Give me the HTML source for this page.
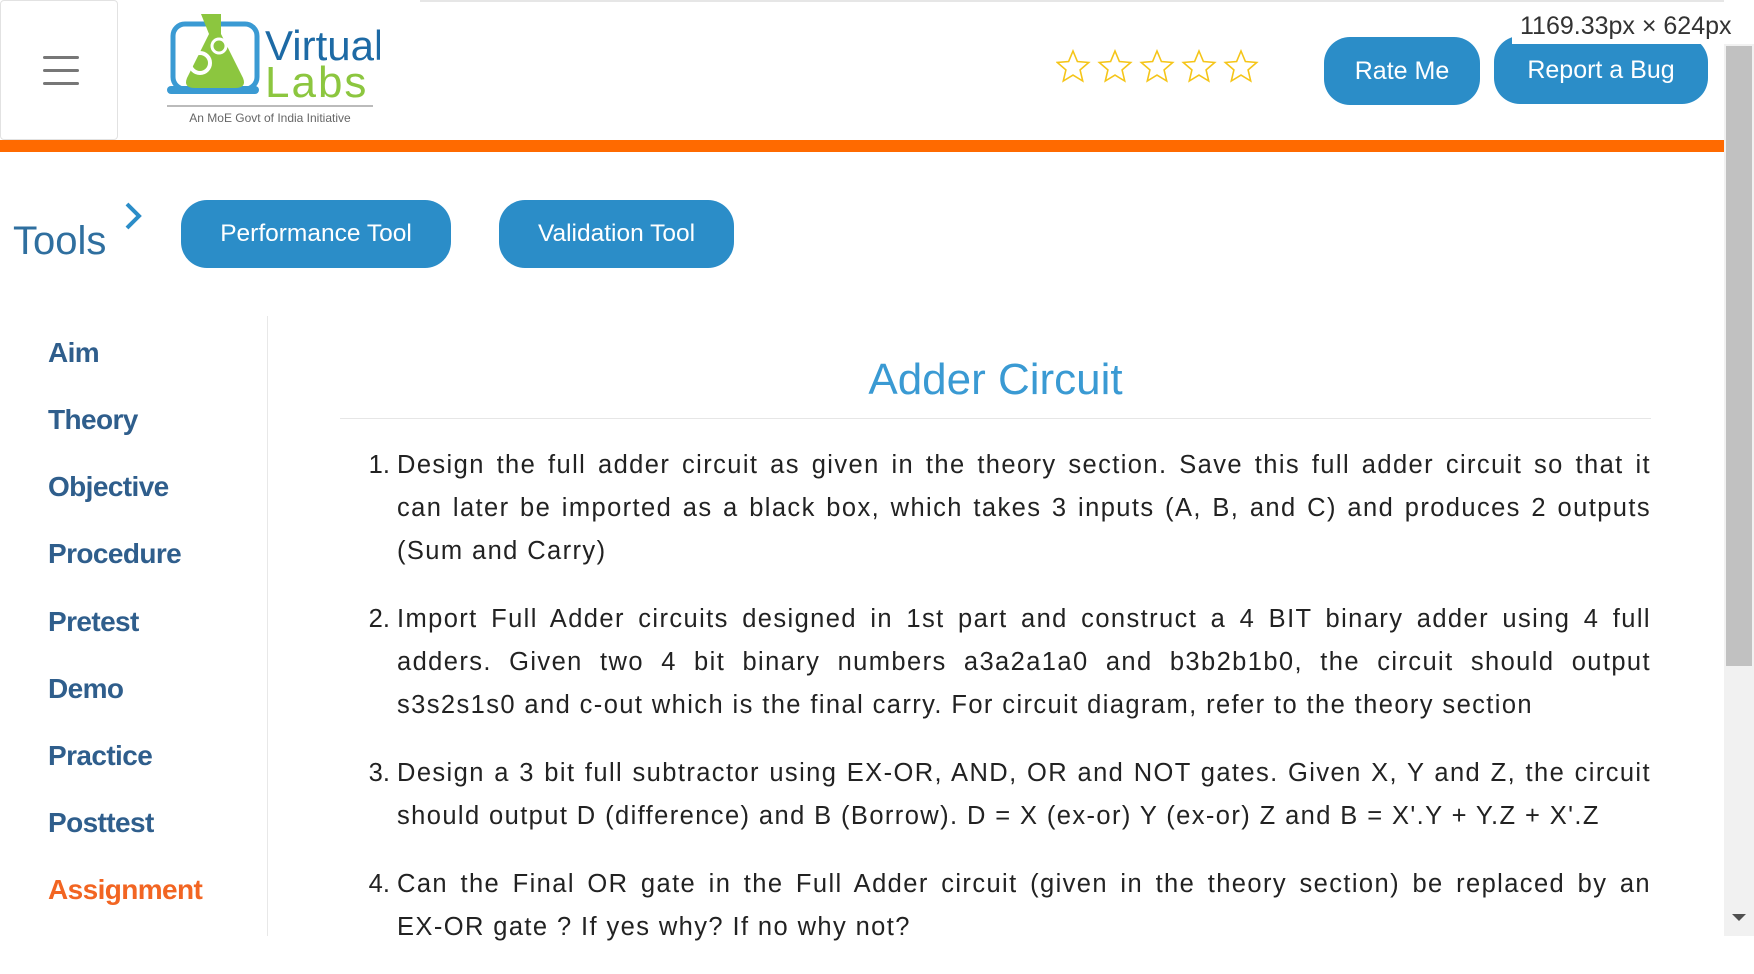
<!DOCTYPE html>
<html><head><meta charset="utf-8">
<style>
*{margin:0;padding:0;box-sizing:border-box}
html,body{width:1754px;height:936px;overflow:hidden;background:#fff;font-family:"Liberation Sans",sans-serif}
.abs{position:absolute}
.ham{left:0;top:0;width:118px;height:140px;border:1px solid #e2e2e2;border-radius:4px}
.ham i{position:absolute;left:42px;width:36px;height:3px;background:#777;border-radius:2px}
.btn{position:absolute;background:#2b8dc8;color:#fff;border-radius:26px;display:flex;align-items:center;justify-content:center}
.side{left:48px;font-size:28px;color:#2f5e8c;font-weight:bold;letter-spacing:-0.6px}
ol{position:absolute;left:397px;top:444px;width:1254px;font-size:25.5px;color:#222;line-height:43px;text-align:justify;letter-spacing:1.4px}
ol li{margin-bottom:25px;padding-left:0}
ol li::marker{letter-spacing:0}
.nb{white-space:nowrap}
</style></head><body>
<div class="abs ham"><i style="top:55px"></i><i style="top:68px"></i><i style="top:81px"></i></div>
<div class="abs" style="left:420px;top:0;width:1304px;height:2px;background:#e6e6e6"></div>
<svg class="abs" style="left:165px;top:10px" width="215" height="120" viewBox="0 0 215 120">
<rect x="8" y="14" width="84" height="65" rx="12" fill="none" stroke="#3a9ad3" stroke-width="5"/>
<rect x="2" y="76" width="92" height="8" rx="4" fill="#3a9ad3"/>
<path d="M36 4h20v20l22 44q4 10-8 10h-40q-12 0-8-10l22-44z" fill="#8cc63f"/>
<circle cx="35" cy="53" r="10" fill="none" stroke="#fff" stroke-width="4"/>
<circle cx="54" cy="36" r="7" fill="none" stroke="#fff" stroke-width="3"/>
<text x="100" y="50" font-size="42" fill="#1d6aa5" font-family="Liberation Sans">Virtual</text>
<text x="100" y="87" font-size="44" fill="#8cc63f" font-family="Liberation Sans" font-weight="300" style="letter-spacing:2px">Labs</text>
<rect x="2" y="95" width="206" height="2" fill="#bbb"/>
<text x="105" y="112" font-size="12" fill="#666" text-anchor="middle">An MoE Govt of India Initiative</text>
</svg>
<div class="abs" style="left:0;top:140px;width:1724px;height:12px;background:#ff6a00"></div>
<svg class="abs" style="left:1056px;top:49px" width="210" height="36" viewBox="0 0 210 36">
<g fill="none" stroke="#f5c518" stroke-width="1.6">
<path id="s" d="M17 2l4.4 10.5 11.3 1-8.6 7.4 2.6 11.1L17 26.1 7.3 32l2.6-11.1L1.3 13.5l11.3-1z"/>
<use href="#s" x="42"/><use href="#s" x="84"/><use href="#s" x="126"/><use href="#s" x="168"/>
</g></svg>
<div class="btn" style="left:1324px;top:37px;width:156px;height:68px;font-size:25px">Rate Me</div>
<div class="btn" style="left:1494px;top:36px;width:214px;height:68px;font-size:25px">Report a Bug</div>
<div class="abs" style="left:1512px;top:8px;width:242px;height:36px;background:#fff;color:#333;font-size:25px;padding-left:8px;line-height:36px">1169.33px × 624px</div>
<div class="abs" style="left:1724px;top:44px;width:30px;height:892px;background:#f1f1f1"></div>
<div class="abs" style="left:1726px;top:46px;width:26px;height:620px;background:#c1c1c1"></div>
<div class="abs" style="left:1732px;top:914px;width:0;height:0;border-left:7px solid transparent;border-right:7px solid transparent;border-top:7px solid #505050"></div>
<div class="abs" style="left:13px;top:219px;font-size:40px;color:#2f6f9f">Tools</div>
<svg class="abs" style="left:122px;top:201px" width="24" height="32"><path d="M5 3l12 12-12 12" fill="none" stroke="#2b8dc8" stroke-width="4"/></svg>
<div class="btn" style="left:181px;top:200px;width:270px;height:68px;font-size:24.5px">Performance Tool</div>
<div class="btn" style="left:499px;top:200px;width:235px;height:68px;font-size:24.5px">Validation Tool</div>
<div class="abs" style="left:267px;top:316px;width:1px;height:620px;background:#e8e8e8"></div>
<div class="abs side" style="top:337px">Aim</div>
<div class="abs side" style="top:404px">Theory</div>
<div class="abs side" style="top:471px">Objective</div>
<div class="abs side" style="top:538px">Procedure</div>
<div class="abs side" style="top:606px">Pretest</div>
<div class="abs side" style="top:673px">Demo</div>
<div class="abs side" style="top:740px">Practice</div>
<div class="abs side" style="top:807px">Posttest</div>
<div class="abs side" style="top:874px;color:#f26522">Assignment</div>
<div class="abs" style="left:340px;top:355px;width:1311px;text-align:center;font-size:44px;color:#3a9ad3">Adder Circuit</div>
<div class="abs" style="left:340px;top:418px;width:1311px;height:1px;background:#e6e6e6"></div>
<ol>
<li><span style="word-spacing:3px">Design the full adder circuit as given in the theory section. Save this full adder circuit so that it can</span> later be imported as a black box, which takes 3 inputs (A, B, and C) and produces 2 outputs (Sum and Carry)</li>
<li>Import Full Adder circuits designed in 1st part and construct a 4 BIT binary adder using 4 full adders. Given two 4 bit binary numbers a3a2a1a0 and b3b2b1b0, the circuit should output s3s2s1s0 and <span class="nb">c-out</span> which is the final carry. For circuit diagram, refer to the theory section</li>
<li>Design a 3 bit full subtractor using EX-OR, AND, OR and NOT gates. Given X, Y and Z, the circuit should output D (difference) and B (Borrow). D = X (ex-or) Y (ex-or) Z and B = X'.Y + Y.Z + X'.Z</li>
<li>Can the Final OR gate in the Full Adder circuit (given in the theory section) be replaced by an <span class="nb">EX-OR</span> gate ? If yes why? If no why not?</li>
</ol>
</body></html>
